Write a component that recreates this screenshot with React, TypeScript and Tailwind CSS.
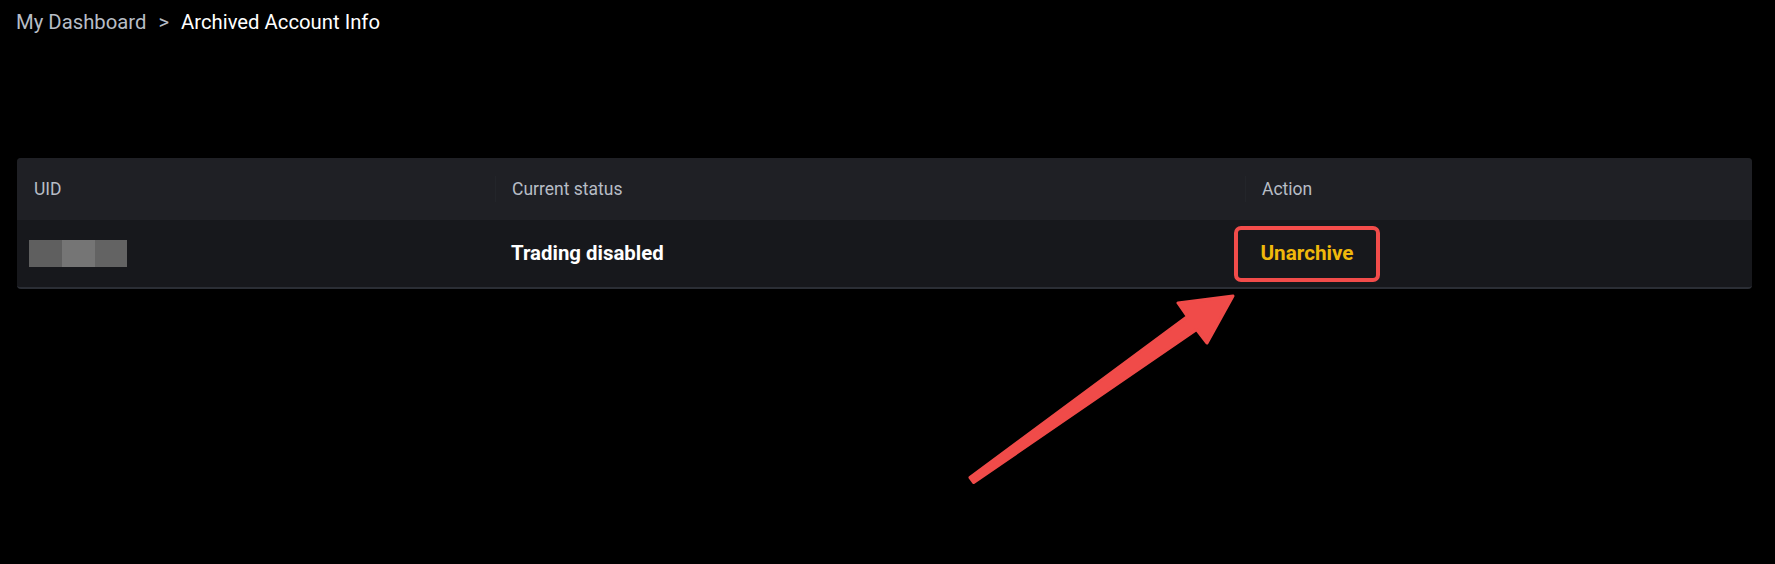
export default function App() {
  return (
    <div
      className="relative h-[564px] w-full overflow-hidden bg-black"
      style={{ fontFamily: 'Roboto, "Liberation Sans", sans-serif' }}
    >
      {/* breadcrumb */}
      <div className="flex h-[44px] items-center pl-[16px] text-[20.3px]">
        <span className="text-[#b7bdc6]">My Dashboard</span>
        <span className="px-[12px] text-[#b7bdc6]">&gt;</span>
        <span className="text-white">Archived Account Info</span>
      </div>

      <div className="ml-[17px] mr-[23px] mt-[114px] overflow-hidden rounded-[4px] border-b-2 border-[#2b2e35] bg-[#17181c]">
        <div className="grid h-[62px] grid-cols-[478px_750px_1fr] items-center bg-[#1f2025] text-[17.5px] text-[#b7bdc6]">
          <div className="pl-[17px]">UID</div>
          <div className="flex items-center">
            <div className="h-[26px] border-l border-[#23252a]" />
            <span className="pl-[16px]">Current status</span>
          </div>
          <div className="flex items-center">
            <div className="h-[26px] border-l border-[#23252a]" />
            <span className="pl-[16px]">Action</span>
          </div>
        </div>
        <div className="grid h-[67px] grid-cols-[478px_750px_1fr] items-center">
          <div className="flex pl-[12px]">
            <div className="h-[27px] w-[33px] bg-[#5f5f5f]" />
            <div className="h-[27px] w-[33px] bg-[#757575]" />
            <div className="h-[27px] w-[32px] bg-[#636363]" />
          </div>
          <div className="pl-[16px] text-[20.4px] font-bold text-white">Trading disabled</div>
          <div>
            <button className="ml-[-11px] h-[56px] w-[146px] rounded-[7px] border-[4px] border-[#f24c4a] text-[20.7px] font-bold text-[#f0b90b]">
              Unarchive
            </button>
          </div>
        </div>
      </div>

      {/* annotation arrow */}
      <svg className="pointer-events-none absolute left-0 top-0" width="1775" height="564">
        <polygon
          points="970,477.5 1187.4,316.5 1178,303 1233,296 1207,343 1196.6,329.5 973.7,482.5"
          fill="#f04b49"
          stroke="#f04b49"
          strokeWidth="3"
          strokeLinejoin="round"
        />
      </svg>
    </div>
  );
}
